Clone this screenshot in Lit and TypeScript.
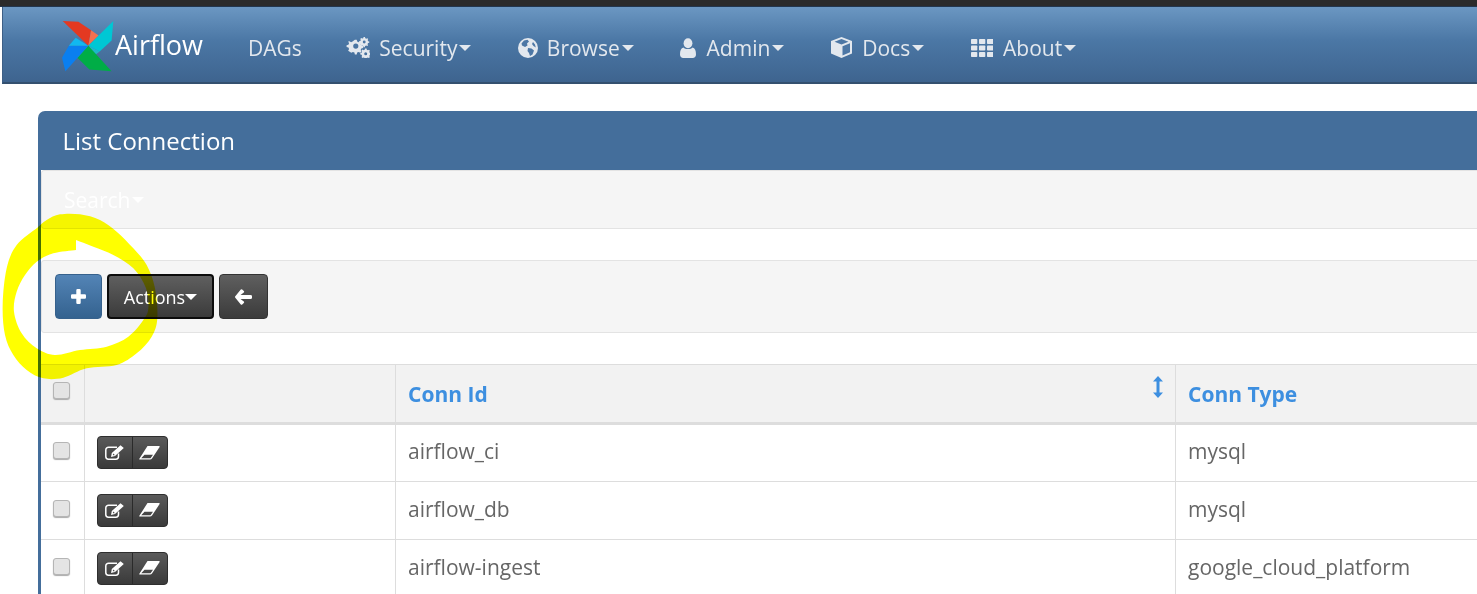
import { LitElement, html, css, svg } from "lit";
import { customElement } from "lit/decorators.js";

const gears = svg`<svg class="ic" width="24" height="21" viewBox="0 0 24 21" fill="#e3e8ee">
<path fill-rule="evenodd" d="M8 4l2 0 .5 2 1.600.7 1.800-1 1.400 1.400-1 1.800.7 1.600 2 .5 0 2-2 .5-.7 1.600 1 1.800-1.400 1.400-1.800-1-1.600.7-.5 2-2 0-.5-2-1.600-.7-1.800 1L.7 15.900l1-1.800-.7-1.600-2-.5 0-2 2-.5.7-1.600-1-1.800L2.100 5.700l1.800 1 1.600-.7zM9 8.200a2.800 2.800 0 1 0 0 5.600 2.800 2.800 0 0 0 0-5.600z" transform="translate(1.500 -1) scale(.92)"/>
<path fill-rule="evenodd" d="M19 0l1.500 0 .3 1.300 1.200.5 1-.6.900 1-.6 1 .5 1.200L25 4.700v1.400l-1.300.3-.5 1.100.6 1.100-1 1-1-.6-1.200.5-.3 1.200H19l-.3-1.300-1.200-.5-1 .6-1-1 .6-1-.5-1.200-1.300-.3V4.600l1.300-.3.5-1.200-.6-1 1-1 1 .6 1.200-.5zM19.700 3.800a1.500 1.500 0 1 0 0 3 1.500 1.500 0 0 0 0-3z" transform="translate(-.5 0) scale(.95)"/>
<path fill-rule="evenodd" d="M19 12l1.500 0 .3 1.300 1.200.5 1-.6.900 1-.6 1 .5 1.200 1.300.3v1.400l-1.300.3-.5 1.100.6 1.100-1 1-1-.6-1.200.5-.3 .5H19l-.3-.6-1.200-.5-1 .6-1-1 .6-1-.5-1.200-1.300-.3v-1.400l1.300-.3.5-1.200-.6-1 1-1 1 .6 1.200-.5zM19.700 15.800a1.500 1.500 0 1 0 0 3 1.500 1.500 0 0 0 0-3z" transform="translate(0 -.5)"/>
</svg>`;
const globe = svg`<svg class="ic" width="20" height="20" viewBox="0 0 20 20">
<circle cx="10" cy="10" r="10" fill="#e3e8ee"/>
<path fill="#4d77a5" d="M6 2.500 9.500 1.800 11 3.500 9 5.500 9.500 7.500 7 9 4 7.500 3.500 5.500zM10 10l3.500.5 2.500 2-1.500 4-2.500 1.500-1-3-1.500-2zM15 4l2 2.500.8 3-2.300-1.500-1.500-2z"/>
</svg>`;
const user = svg`<svg class="ic wide" width="16" height="20" viewBox="0 0 16 20" fill="#e3e8ee">
<ellipse cx="8" cy="5.200" rx="4.400" ry="5"/>
<path d="M3.500 9.500C5 11.500 11 11.500 12.500 9.500 15 10 16 12.500 16 16.500 16 18.800 14.500 20 12.800 20H3.200C1.500 20 0 18.800 0 16.500 0 12.500 1 10 3.500 9.500z"/>
</svg>`;
const cube = svg`<svg class="ic wide" width="21" height="21" viewBox="0 0 21 21">
<path fill="#e3e8ee" d="M10.500 0 21 4v12.500L10.500 21 0 16.500V4z"/>
<path fill="#4d77a5" d="M10.500 2 17.500 4.700 10.500 7.400 3.500 4.700zM11.500 9.200 19 6.300v9L11.500 18.600z"/>
</svg>`;
const th = svg`<svg class="ic wide" width="22" height="18" viewBox="0 0 22 18" fill="#e3e8ee">
${[0, 6.5, 13].map((y) => [0, 8, 16].map((x) => svg`<rect x=${x} y=${y} width="6.300" height="5" rx=".8"/>`))}
</svg>`;
const logo = svg`<svg class="logo" width="52" height="52" viewBox="40 30 152 152">
<path fill="#e43921" d="M117 105 42 33 88 35 125 60z"/>
<path fill="#f4704f" d="M125 60 147 75 117 105z"/>
<path fill="#00c7d4" d="M190 33 185 90 150 122 117 105 147 75z"/>
<path fill="#11d3dc" d="M117 105 150 122 133 135z" opacity=".7"/>
<path fill="#00ad46" d="M117 105 185 180 120 175 85 140z"/>
<path fill="#04d659" d="M117 105 85 140 100 112z" opacity=".7"/>
<path fill="#0a7ff0" d="M117 105 50 180 40 140 60 105z"/>
<path fill="#11b8f0" d="M60 105 80 82 117 105z"/>
</svg>`;
const plus = svg`<svg width="15" height="15" viewBox="0 0 15 15" fill="#fff"><path d="M5.300 1.200Q5.300 0 6.500 0h2Q9.700 0 9.700 1.200v4.100h4.100q1.200 0 1.200 1.200v2q0 1.200-1.200 1.200H9.700v4.100Q9.700 15 8.500 15h-2q-1.200 0-1.200-1.200V9.700H1.200Q0 9.700 0 8.500v-2q0-1.200 1.200-1.200h4.100z"/></svg>`;
const back = svg`<svg width="17" height="16" viewBox="0 0 17 16" fill="#fff"><path d="M7.200.5 8.800 2.100q.7.700 0 1.400L5.500 6H15.500Q17 6 17 7.300v1.400Q17 10 15.500 10H5.500l3.300 2.500q.7.700 0 1.400L7.200 15.500q-.7.700-1.400 0L.3 8.700q-.6-.7 0-1.400L5.800.5q.7-.7 1.400 0z"/></svg>`;
const edit = svg`<svg width="19" height="15" viewBox="0 0 19 15" fill="none"><path stroke="#fff" stroke-width="1.500" d="M13.500 8.500v3a2.700 2.700 0 0 1-2.700 2.700H3.500A2.700 2.700 0 0 1 .8 11.500V5A2.700 2.700 0 0 1 3.500 2.300H12"/><path fill="#fff" d="M15.500.2 18.800 3 10 11 6 12 6.800 8zM7.800 9.500l1 1 1-.5-1.500-1.500z"/></svg>`;
const eraser = svg`<svg width="21" height="14" viewBox="0 0 21 14"><path fill="#fff" fill-rule="evenodd" d="M8.500 0 20 0q1.200 0 .6 1.100L13 12.500q-.8 1.100-2 1.100H1q-1.200 0-.5-1.100zM5.500 8.800 2.200 12.300h9.300L14 8.800z"/></svg>`;
const sort = svg`<svg width="10" height="22" viewBox="0 0 10 22" fill="#3d8fe0"><path d="M5 0 10 5.500H6.500v11H10L5 22 0 16.500h3.500v-11H0z"/></svg>`;

const rows = [
  ["airflow_ci", "mysql"],
  ["airflow_db", "mysql"],
  ["airflow-ingest", "google_cloud_platform"],
];

type Pt = [number, number];
/* Catmull-Rom through the points, open curve: gives the hand-drawn highlighter edge. */
function smooth(p: Pt[]): string {
  let d = "";
  for (let i = 0; i < p.length - 1; i++) {
    const a = p[Math.max(i - 1, 0)], b = p[i], c = p[i + 1], e = p[Math.min(i + 2, p.length - 1)];
    const c1 = [b[0] + (c[0] - a[0]) / 6, b[1] + (c[1] - a[1]) / 6];
    const c2 = [c[0] - (e[0] - b[0]) / 6, c[1] - (e[1] - b[1]) / 6];
    d += `C${c1[0]} ${c1[1]} ${c2[0]} ${c2[1]} ${c[0]} ${c[1]}`;
  }
  return d;
}
const outer: Pt[] = [[110,70],[140,45],[180,28],[240,28],[300,45],[350,80],[400,130],[440,180],[465,250],[472,340],[455,395],[410,445],[350,480],[260,490],[190,518],[130,520],[80,495],[40,450],[15,390],[8,300],[20,190],[50,120],[110,70]];
const inner: Pt[] = [[228,135],[160,145],[110,170],[75,210],[50,260],[42,320],[65,385],[110,430],[165,450],[240,435],[320,425],[385,395],[430,345],[445,310],[438,250],[400,190],[340,150],[280,125],[228,105]];
const markPath = `M110 70${smooth(outer)}ZM228 135${smooth(inner)}Z`;

@customElement("app-root")
export class AppRoot extends LitElement {
  static styles = css`
    :host { display: block; position: relative; width: 1477px; height: 594px; overflow: hidden; background: #fff; font-family: "Open Sans", sans-serif; }
    .topbar { height: 6px; background: #2b2b2b; border-bottom: 1px solid #23364d; }
    .nav { height: 69px; padding-top: 6px; margin-left: 2px; background: linear-gradient(#6b97c2, #4b77a5 45%, #3e648f); border-left: 1px solid #3d5f86; border-bottom: 2px solid #34506f; display: flex; align-items: center; padding-left: 59px; color: #e3e8ee; font-size: 21px; }
    .brand { display: flex; align-items: center; color: #fff; font-size: 27px; margin-right: 45px; position: relative; top: -3px; }
    .logo { margin-right: 1px; position: relative; top: 1px; }
    .item { display: flex; align-items: center; margin-right: 46.400px; line-height: 28px; }
    .item.first { margin-right: 44.500px; }
    .ic { margin-right: 9px; flex: none; }
    .ic.wide { margin-right: 10.500px; }
    .caret { width: 0; height: 0; border-left: 6.500px solid transparent; border-right: 6.500px solid transparent; border-top: 6px solid currentColor; margin-left: 2px; }
    .panel { margin: 27px 0 0 38px; width: 1600px; }
    .heading { height: 59px; background: #446e9b; border-radius: 7px 0 0 0; color: #fff; font-size: 24px; display: flex; align-items: center; padding-left: 24.500px; }
    .body { border-left: 3px solid #446e9b; }
    .well { background: #f5f5f5; border: 1px solid #e3e3e3; border-radius: 3px 0 0 3px; }
    .search { height: 57px; display: flex; align-items: center; padding-left: 22px; color: #fff; font-size: 21px; margin-bottom: 31px; }
    .search .caret { border-top-color: #fff; margin-left: 1px; }
    .tools { height: 73px; display: flex; align-items: center; gap: 5px; padding-left: 13px; margin-bottom: 31px; box-sizing: border-box; }
    .btn { height: 45px; box-sizing: border-box; border-radius: 4px; display: flex; align-items: center; justify-content: center; color: #fff; font-size: 18px; }
    .blue { width: 47px; background: linear-gradient(#5384b6, #34628f); border: 1px solid #36618c; }
    .dark { background: linear-gradient(#5f5f5f, #3b3b3b); border: 1px solid #333; }
    .actions { width: 107px; border: 2px solid #0c0c0c; }
    .actions .caret { margin-left: 0; }
    .backb { width: 49px; }
    table { border-collapse: collapse; table-layout: fixed; width: 1600px; color: #666; font-size: 21px; }
    th, td { border: 1px solid #ddd; padding: 0 12px 0 12.500px; text-align: left; height: 58px; box-sizing: border-box; }
    td { padding-bottom: 4px; }
    td.c1 { padding: 0 12px 1px; }
    tr > :first-child { border-left: 0; }
    thead th { background: #f2f2f2; height: 59px; border-bottom: 3px solid #ddd; color: #3d8fe0; font-weight: 700; font-size: 21px; }
    .c0 { width: 43px; padding: 0; }
    td.c0 { padding: 0 0 5px; }
    .c1 { width: 311px; }
    .c2 { width: 780px; }
    .sorted { display: flex; justify-content: space-between; align-items: center; }
    .sorted svg { margin: -14px 0 0 0; display: block; }
    input[type="checkbox"] { appearance: none; display: block; width: 17px; height: 17px; margin: 0 0 0 12px; box-sizing: border-box; background: #e4e4e4; border: 1px solid #b5b5b5; border-radius: 3px; box-shadow: 0 1px 1px #aaa; }
    thead input { position: relative; top: -3px; }
    .group { display: inline-flex; vertical-align: middle; border-radius: 4px; overflow: hidden; background: linear-gradient(#5a5a5a, #3a3a3a); border: 1px solid #2e2e2e; height: 33px; box-sizing: border-box; width: 71px; }
    .group span { flex: 1; display: flex; align-items: center; justify-content: center; }
    .group span + span { border-left: 1px solid #2a2a2a; }
    .mark { position: absolute; left: 0; top: 205px; mix-blend-mode: multiply; pointer-events: none; }
  `;

  render() {
    return html`
      <div class="topbar"></div>
      <nav class="nav">
        <div class="brand">${logo}<span>Airflow</span></div>
        <div class="item first">DAGs</div>
        <div class="item">${gears}Security<i class="caret"></i></div>
        <div class="item">${globe}Browse<i class="caret"></i></div>
        <div class="item">${user}Admin<i class="caret"></i></div>
        <div class="item">${cube}Docs<i class="caret"></i></div>
        <div class="item">${th}About<i class="caret"></i></div>
      </nav>
      <section class="panel">
        <div class="heading">List Connection</div>
        <div class="body">
          <div class="well search">Search<i class="caret"></i></div>
          <div class="well tools">
            <div class="btn blue">${plus}</div>
            <div class="btn dark actions">Actions<i class="caret"></i></div>
            <div class="btn dark backb">${back}</div>
          </div>
          <table>
            <thead>
              <tr>
                <th class="c0"><input type="checkbox" /></th>
                <th class="c1"></th>
                <th class="c2"><div class="sorted"><span>Conn Id</span>${sort}</div></th>
                <th>Conn Type</th>
              </tr>
            </thead>
            <tbody>
              ${rows.map(
                (r) => html`<tr>
                  <td class="c0"><input type="checkbox" /></td>
                  <td class="c1"><div class="group"><span>${edit}</span><span>${eraser}</span></div></td>
                  <td>${r[0]}</td>
                  <td>${r[1]}</td>
                </tr>`
              )}
            </tbody>
          </table>
        </div>
      </section>
      <svg class="mark" width="170" height="180" viewBox="0 0 510 540">
        <path fill="#ffff00" fill-rule="evenodd" d=${markPath}></path>
      </svg>
    `;
  }
}
